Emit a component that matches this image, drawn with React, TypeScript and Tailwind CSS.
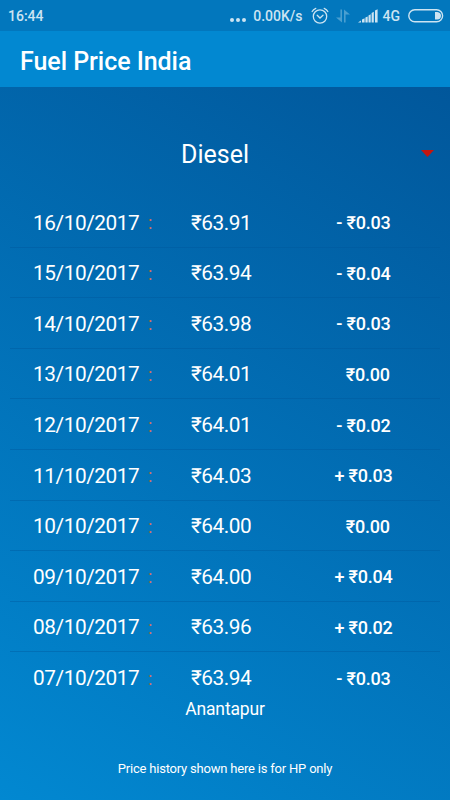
import React from "react";

interface PriceEntry {
  date: string;
  price: string;
  sign?: string;
  change: string;
}

const history: PriceEntry[] = [
  { date: "16/10/2017", price: "63.91", sign: "-", change: "0.03" },
  { date: "15/10/2017", price: "63.94", sign: "-", change: "0.04" },
  { date: "14/10/2017", price: "63.98", sign: "-", change: "0.03" },
  { date: "13/10/2017", price: "64.01", change: "0.00" },
  { date: "12/10/2017", price: "64.01", sign: "-", change: "0.02" },
  { date: "11/10/2017", price: "64.03", sign: "+", change: "0.03" },
  { date: "10/10/2017", price: "64.00", change: "0.00" },
  { date: "09/10/2017", price: "64.00", sign: "+", change: "0.04" },
  { date: "08/10/2017", price: "63.96", sign: "+", change: "0.02" },
  { date: "07/10/2017", price: "63.94", sign: "-", change: "0.03" },
];

const AlarmIcon: React.FC = () => (
  <svg
    width="18"
    height="18"
    viewBox="0 0 18 18"
    fill="none"
    stroke="currentColor"
    strokeWidth="1.3"
    strokeLinecap="round"
  >
    <circle cx="9" cy="9.5" r="6.7" />
    <path d="M6.2 8.3 9 11l3-2.7" />
    <path d="M1.2 4.6Q2.2 2.2 4.8 1.3M16.8 4.6Q15.8 2.2 13.2 1.3" />
  </svg>
);

const DataIcon: React.FC = () => (
  <svg width="14" height="14" viewBox="0 0 14 14" fill="currentColor">
    <path d="M4.4 0.5H6V13.5L0 8.6H4.4Z" />
    <path d="M8 0.5 14 5.4H9.6V13.5H8Z" />
  </svg>
);

const SignalIcon: React.FC = () => (
  <svg width="20" height="14" viewBox="0 0 20 14" fill="currentColor">
    <path d="M0 13.5 2.9 11.5v2zM4 10.6l2.6-1.3v4.2H4zM7.4 8.6l2.3-1.2v6.1H7.4zM10.5 6.4l2.2-1.2v8.3h-2.2zM13.6 3.9l2.2-1.2v10.8h-2.2zM17 1.6 19.6.2v13.3H17z" />
  </svg>
);

const BatteryIcon: React.FC = () => (
  <svg width="36" height="14" viewBox="0 0 36 14">
    <rect
      x="0.8"
      y="0.8"
      width="33.8"
      height="12"
      rx="6"
      fill="none"
      stroke="currentColor"
      strokeWidth="1.4"
    />
    <path
      d="M27 3h2.3q3.7.4 3.7 3.8t-3.7 3.8H27z"
      fill="currentColor"
    />
  </svg>
);

const StatusBar: React.FC = () => (
  <div className="flex h-[31px] items-center bg-[#0277bd] pt-px pr-[6px] pl-2 text-sm font-medium text-[#cde4f2]">
    <span>16:44</span>
    <div className="ml-auto flex items-center">
      <div className="mt-2 mr-[7px] flex gap-[2px]">
        <i className="size-1 rounded-full bg-current" />
        <i className="size-1 rounded-full bg-current" />
        <i className="size-1 rounded-full bg-current" />
      </div>
      <span className="mr-2">0.00K/s</span>
      <AlarmIcon />
      <div className="mr-2 ml-[7px] text-[#4a9fd0]">
        <DataIcon />
      </div>
      <SignalIcon />
      <span className="mr-2 ml-[5px]">4G</span>
      <BatteryIcon />
    </div>
  </div>
);

const HistoryRow: React.FC<{ entry: PriceEntry }> = ({ entry }) => (
  <li className="flex h-[50.6px] items-center border-b border-[#01579b]/40 pt-[3px] text-[20.8px] tracking-[-0.44px] last:border-transparent">
    <span className="w-[138px] pl-[23px]">{entry.date}</span>
    <span className="w-[43px] text-lg text-[#d9704f]">:</span>
    <span className="w-[92px]">₹{entry.price}</span>
    <span className="flex-1 pl-[4px] text-center text-lg font-medium tracking-[-0.2px] whitespace-pre">
      {entry.sign ?? " "} ₹{entry.change}
    </span>
  </li>
);

export default function App() {
  return (
    <div className="flex h-[800px] w-[450px] flex-col overflow-hidden font-[Roboto,sans-serif] text-white">
      <StatusBar />
      <header className="flex h-[56.4px] items-center bg-[#0288d1] px-5 pt-[5px]">
        <h1 className="text-[25px] font-medium tracking-[-0.05px]">
          Fuel Price India
        </h1>
      </header>

      <main className="flex flex-1 flex-col bg-[linear-gradient(32.3deg,#0288d1,#01579b)]">
        <div className="mt-[46.6px] flex h-[40px] items-center pr-4">
          <span className="flex-1 pt-[2px] pl-[9px] text-center text-[25px]">
            Diesel
          </span>
          <svg
            className="-mt-px"
            width="13"
            height="7"
            viewBox="0 0 13 7"
            fill="#c4160f"
          >
            <path d="M0 0h13L6.5 7z" />
          </svg>
        </div>

        <ul className="mt-[23px] w-[430px] self-center">
          {history.map((entry) => (
            <HistoryRow key={entry.date} entry={entry} />
          ))}
        </ul>

        <p className="-mt-[6px] text-center text-[17.5px] leading-6 tracking-[-0.15px]">
          Anantapur
        </p>
        <p className="mt-[38px] text-center text-[13px] leading-5 tracking-[-0.2px]">
          Price history shown here is for HP only
        </p>
      </main>
    </div>
  );
}
